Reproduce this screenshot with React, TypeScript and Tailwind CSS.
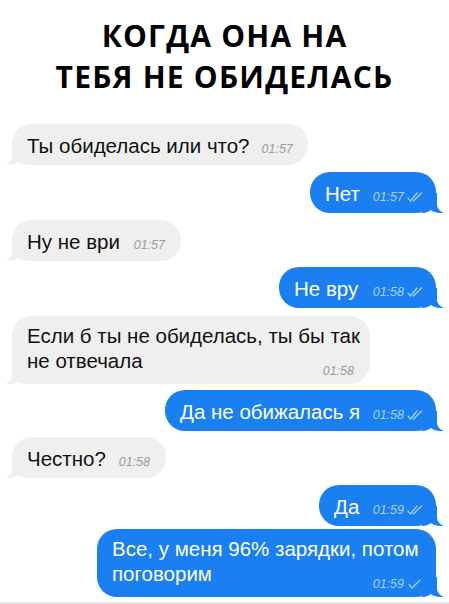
import type { ReactNode } from 'react';

type Side = 'in' | 'out';

function Checks({ count }: { count: 1 | 2 }) {
  return (
    <svg width="16" height="10" viewBox="0 0 16 10" className="ml-[3px] shrink-0" fill="none" stroke="currentColor" strokeWidth="1.2" strokeLinecap="round" strokeLinejoin="round">
      {count === 2 ? (
        <>
          <path d="M1 6 L3.5 9 L10 1" />
          <path d="M6.5 9 L14.5 1" />
        </>
      ) : (
        <path d="M2 5.5 L5 9 L13 1" />
      )}
    </svg>
  );
}

function Tail({ side }: { side: Side }) {
  return (
    <svg
      width="22"
      height="20"
      viewBox="0 0 22 20"
      className={
        side === 'in'
          ? 'absolute bottom-0 left-[-7px] text-[#efefef]'
          : 'absolute bottom-0 right-[-8px] -scale-x-100 text-[#1a7ff1]'
      }
    >
      <path d="M7 0 L7 11 C7 15 4.5 18.5 0 20 C5 20.4 10 19.4 13 17 C15.5 19 18 20 22 20 L22 0 Z" fill="currentColor" />
    </svg>
  );
}

function Bubble({
  side,
  time,
  checks,
  width,
  className = '',
  children,
  multi = false,
}: {
  side: Side;
  time: string;
  checks?: 1 | 2;
  width: string;
  className?: string;
  children: ReactNode;
  multi?: boolean;
}) {
  const isOut = side === 'out';
  const timeEl = (
    <span
      className={
        'flex items-center text-[12.5px] italic leading-none ' +
        (isOut ? 'text-[#a9d1fb]' : 'text-[#9b9b9b]')
      }
    >
      {time}
      {checks && <Checks count={checks} />}
    </span>
  );

  return (
    <div className={(isOut ? 'self-end ' : 'self-start ') + className}>
      <div
        className={
          'relative rounded-[20px] text-[20.5px] leading-[25px] whitespace-nowrap ' +
          width +
          (isOut ? ' bg-[#1a7ff1] text-white pl-[15px] pr-[13px]' : ' bg-[#efefef] text-[#111] pl-[15px] pr-[16px]') +
          (multi ? ' pt-[7px] pb-[11px]' : ' pt-[9px] pb-[7px]')
        }
      >
        <Tail side={side} />
        {multi ? (
          <div className="relative">
            {children}
            <div className="absolute bottom-[-4px] right-0">{timeEl}</div>
          </div>
        ) : (
          <div className="relative flex items-end justify-between">
            <span>{children}</span>
            <span className="mb-[3px] ml-3">{timeEl}</span>
          </div>
        )}
      </div>
    </div>
  );
}

export default function App() {
  return (
    <div className="w-[449px] h-[604px] overflow-hidden bg-white flex flex-col font-['Liberation_Sans',Arial,sans-serif]">
      <h1 className="pt-[15px] text-center text-[30px] leading-[41px] tracking-[1.2px] font-bold text-black font-['Open_Sans',sans-serif]">
        КОГДА ОНА НА
        <br />
        ТЕБЯ НЕ ОБИДЕЛАСЬ
      </h1>

      <div className="flex flex-col pl-[12px] pr-[13px] mt-[27px]">
        <Bubble side="in" time="01:57" width="w-[296px]">
          Ты обиделась или что?
        </Bubble>
        <Bubble side="out" time="01:57" checks={2} width="w-[126px]" className="mt-[7px]">
          Нет
        </Bubble>
        <Bubble side="in" time="01:57" width="w-[169px]" className="mt-[7px]">
          Ну не ври
        </Bubble>
        <Bubble side="out" time="01:58" checks={2} width="w-[157px]" className="mt-[6px]">
          Не вру
        </Bubble>
        <Bubble side="in" time="01:58" width="w-[358px]" className="mt-[8px]" multi>
          Если б ты не обиделась, ты бы так
          <br />
          не отвечала
        </Bubble>
        <Bubble side="out" time="01:58" checks={2} width="w-[271px]" className="mt-[6px]">
          Да не обижалась я
        </Bubble>
        <Bubble side="in" time="01:58" width="w-[154px]" className="mt-[6px]">
          Честно?
        </Bubble>
        <Bubble side="out" time="01:59" checks={2} width="w-[117px]" className="mt-[7px]">
          Да
        </Bubble>
        <Bubble side="out" time="01:59" checks={1} width="w-[339px]" className="mt-[3px]" multi>
          Все, у меня 96% зарядки, потом
          <br />
          поговорим
        </Bubble>
      </div>

      <div className="mt-auto h-[2px] bg-[#e3e3e3]" />
    </div>
  );
}
